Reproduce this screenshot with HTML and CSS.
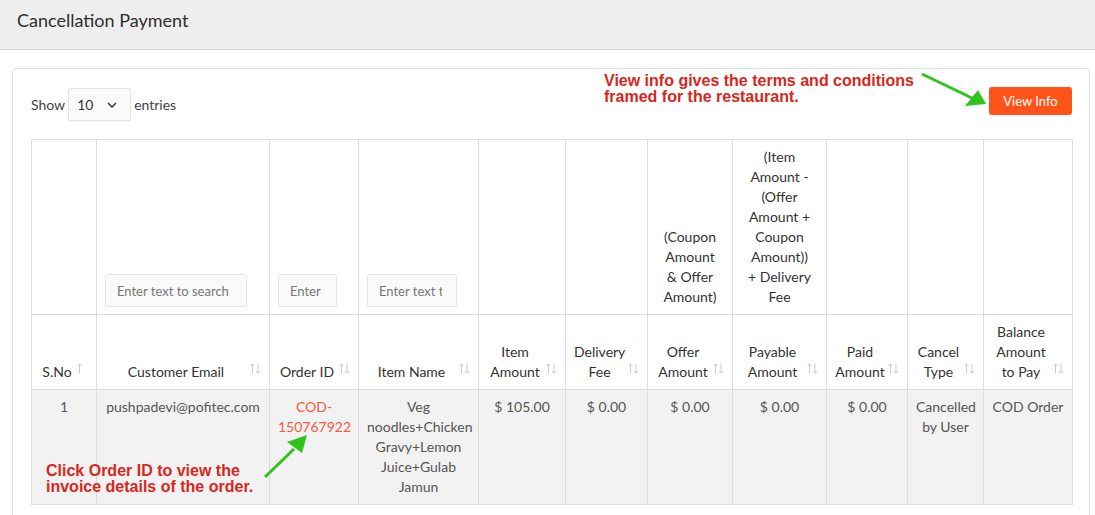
FILE: index.html
```html
<!DOCTYPE html>
<html lang="en">
<head>
<meta charset="utf-8">
<title>Cancellation Payment</title>
<link rel="stylesheet" href="styles.css">
</head>
<body>
<header class="page-head">
  <h1 class="page-title">Cancellation Payment</h1>
</header>

<main class="card">
  <div class="toolbar">
    <div class="length">
      <span>Show</span>
      <span class="select">10
        <svg class="chev" width="10" height="6" viewBox="0 0 10 6"><polyline points="1,1 5,5 9,1" fill="none" stroke="#333" stroke-width="1.5"/></svg>
      </span>
      <span>entries</span>
    </div>
    <button class="btn-info">View Info</button>
  </div>

  <table class="grid">
    <colgroup>
      <col class="c1"><col class="c2"><col class="c3"><col class="c4"><col class="c5"><col class="c6"><col class="c7"><col class="c8"><col class="c9"><col class="c10"><col class="c11">
    </colgroup>
    <thead>
      <tr class="filters">
        <th></th>
        <th><input class="search w-email" placeholder="Enter text to search"></th>
        <th><input class="search w-order" placeholder="Enter text to search"></th>
        <th><input class="search w-item" placeholder="Enter text to search"></th>
        <th></th>
        <th></th>
        <th>(Coupon<br>Amount<br>&amp; Offer<br>Amount)</th>
        <th>(Item<br>Amount -<br>(Offer<br>Amount +<br>Coupon<br>Amount))<br>+ Delivery<br>Fee</th>
        <th></th>
        <th></th>
        <th></th>
      </tr>
      <tr class="heads">
        <th class="sorted">S.No<svg class="sort" width="11" height="11" viewBox="0 0 11 11"><path d="M2.5 10.5V1M0.6 3L2.5 0.8L4.4 3" fill="none" stroke="#c6ccd6" stroke-width="1"/></svg></th>
        <th>Customer Email<svg class="sort" width="11" height="11" viewBox="0 0 11 11"><path d="M2.5 10.5V1M0.6 3L2.5 0.8L4.4 3" fill="none" stroke="#c6ccd6" stroke-width="1"/><path d="M8 0.5V10M6.1 8L8 10.2L9.9 8" fill="none" stroke="#c6ccd6" stroke-width="1"/></svg></th>
        <th>Order ID<svg class="sort" width="11" height="11" viewBox="0 0 11 11"><path d="M2.5 10.5V1M0.6 3L2.5 0.8L4.4 3" fill="none" stroke="#c6ccd6" stroke-width="1"/><path d="M8 0.5V10M6.1 8L8 10.2L9.9 8" fill="none" stroke="#c6ccd6" stroke-width="1"/></svg></th>
        <th>Item Name<svg class="sort" width="11" height="11" viewBox="0 0 11 11"><path d="M2.5 10.5V1M0.6 3L2.5 0.8L4.4 3" fill="none" stroke="#c6ccd6" stroke-width="1"/><path d="M8 0.5V10M6.1 8L8 10.2L9.9 8" fill="none" stroke="#c6ccd6" stroke-width="1"/></svg></th>
        <th>Item<br>Amount<svg class="sort" width="11" height="11" viewBox="0 0 11 11"><path d="M2.5 10.5V1M0.6 3L2.5 0.8L4.4 3" fill="none" stroke="#c6ccd6" stroke-width="1"/><path d="M8 0.5V10M6.1 8L8 10.2L9.9 8" fill="none" stroke="#c6ccd6" stroke-width="1"/></svg></th>
        <th>Delivery<br>Fee<svg class="sort" width="11" height="11" viewBox="0 0 11 11"><path d="M2.5 10.5V1M0.6 3L2.5 0.8L4.4 3" fill="none" stroke="#c6ccd6" stroke-width="1"/><path d="M8 0.5V10M6.1 8L8 10.2L9.9 8" fill="none" stroke="#c6ccd6" stroke-width="1"/></svg></th>
        <th>Offer<br>Amount<svg class="sort" width="11" height="11" viewBox="0 0 11 11"><path d="M2.5 10.5V1M0.6 3L2.5 0.8L4.4 3" fill="none" stroke="#c6ccd6" stroke-width="1"/><path d="M8 0.5V10M6.1 8L8 10.2L9.9 8" fill="none" stroke="#c6ccd6" stroke-width="1"/></svg></th>
        <th>Payable<br>Amount<svg class="sort" width="11" height="11" viewBox="0 0 11 11"><path d="M2.5 10.5V1M0.6 3L2.5 0.8L4.4 3" fill="none" stroke="#c6ccd6" stroke-width="1"/><path d="M8 0.5V10M6.1 8L8 10.2L9.9 8" fill="none" stroke="#c6ccd6" stroke-width="1"/></svg></th>
        <th>Paid<br>Amount<svg class="sort" width="11" height="11" viewBox="0 0 11 11"><path d="M2.5 10.5V1M0.6 3L2.5 0.8L4.4 3" fill="none" stroke="#c6ccd6" stroke-width="1"/><path d="M8 0.5V10M6.1 8L8 10.2L9.9 8" fill="none" stroke="#c6ccd6" stroke-width="1"/></svg></th>
        <th>Cancel<br>Type<svg class="sort" width="11" height="11" viewBox="0 0 11 11"><path d="M2.5 10.5V1M0.6 3L2.5 0.8L4.4 3" fill="none" stroke="#c6ccd6" stroke-width="1"/><path d="M8 0.5V10M6.1 8L8 10.2L9.9 8" fill="none" stroke="#c6ccd6" stroke-width="1"/></svg></th>
        <th>Balance<br>Amount<br>to Pay<svg class="sort" width="11" height="11" viewBox="0 0 11 11"><path d="M2.5 10.5V1M0.6 3L2.5 0.8L4.4 3" fill="none" stroke="#c6ccd6" stroke-width="1"/><path d="M8 0.5V10M6.1 8L8 10.2L9.9 8" fill="none" stroke="#c6ccd6" stroke-width="1"/></svg></th>
      </tr>
    </thead>
    <tbody>
      <tr>
        <td>1</td>
        <td>pushpadevi@pofitec.com</td>
        <td><a class="order-link" href="#">COD-<br>150767922</a></td>
        <td>Veg<br>noodles+Chicken<br>Gravy+Lemon<br>Juice+Gulab<br>Jamun</td>
        <td>$ 105.00</td>
        <td>$ 0.00</td>
        <td>$ 0.00</td>
        <td>$ 0.00</td>
        <td>$ 0.00</td>
        <td>Cancelled<br>by User</td>
        <td>COD Order</td>
      </tr>
    </tbody>
  </table>
</main>

<p class="note note-top">View info gives the terms and conditions<br>framed for the restaurant.</p>
<p class="note note-bottom">Click Order ID to view the<br>invoice details of the order.</p>

<svg class="arrows" width="1095" height="515" viewBox="0 0 1095 515">
  <line x1="922" y1="74" x2="972" y2="98" stroke="#2fc41b" stroke-width="3"/>
  <polygon points="986,104 965,106 978,90" fill="#2fc41b"/>
  <line x1="265" y1="477" x2="294" y2="449" stroke="#2fc41b" stroke-width="3"/>
  <polygon points="307,435 287,442 302,453" fill="#2fc41b"/>
</svg>
</body>
</html>
```

FILE: styles.css
```css
* { box-sizing: border-box; }

body {
  margin: 0;
  position: relative;
  background: #ffffff;
  font-family: Lato, "Open Sans", sans-serif;
  font-size: 14px;
  color: #333;
  overflow: hidden;
}

.page-head {
  height: 50px;
  background: #eeeeee;
  border-bottom: 1px solid #d2d2d2;
  padding: 0 17px;
  display: flex;
  align-items: center;
}

.page-title {
  margin: 0 0 9px;
  font-size: 18px;
  font-weight: normal;
  color: #2f2f2f;
}

.card {
  margin: 18px 5px 0 12px;
  border: 1px solid #dddddd;
  border-radius: 4px;
  padding: 18px 17px 20px 18px;
}

.toolbar {
  display: flex;
  justify-content: space-between;
  align-items: flex-start;
  margin-bottom: 18px;
}

.length {
  display: flex;
  align-items: center;
  gap: 3px;
  color: #444;
  padding-top: 1px;
}

.select {
  width: 63px;
  height: 33px;
  border: 1px solid #e3e3e3;
  background: #fafafa;
  border-radius: 2px;
  box-shadow: 0 1px 1px rgba(0,0,0,0.05);
  display: flex;
  align-items: center;
  justify-content: space-between;
  padding: 0 13px 0 8px;
  color: #333;
}

.btn-info {
  width: 83px;
  height: 28px;
  border: 0;
  border-radius: 3px;
  background: #ff5419;
  color: #ffffff;
  font-family: inherit;
  font-size: 13px;
  padding: 0;
}

.grid {
  width: 1041px;
  table-layout: fixed;
  border-collapse: collapse;
  border: 1px solid #dddddd;
}

.c1 { width: 65px; }
.c2 { width: 173px; }
.c3 { width: 89px; }
.c4 { width: 120px; }
.c5 { width: 87px; }
.c6 { width: 82px; }
.c7 { width: 85px; }
.c8 { width: 94px; }
.c9 { width: 81px; }
.c10 { width: 76px; }
.c11 { width: 89px; }

.grid th,
.grid td {
  border: 1px solid #dddddd;
  line-height: 20px;
  text-align: center;
}

.grid th {
  font-weight: normal;
  color: #333;
  vertical-align: bottom;
}

.filters th {
  padding: 7px 8px 7px;
  height: 173px;
}

.heads th {
  position: relative;
  padding: 7px 22px 7px 8px;
  height: 74px;
}

.sort {
  position: absolute;
  right: 8px;
  bottom: 15px;
}

.search {
  display: block;
  height: 33px;
  border: 1px solid #e5e5e5;
  background: #fafafa;
  border-radius: 2px;
  font-family: inherit;
  font-size: 13px;
  color: #555;
  padding: 0 11px;
  outline: none;
}

.search::placeholder { color: #777; }

.w-email { width: 142px; }
.w-order { width: 59px; padding-right: 13px; }
.w-item { width: 90px; padding-right: 14px; }

.grid tbody td {
  background: #f2f2f2;
  color: #555;
  vertical-align: top;
  padding: 7px 8px 7px;
  height: 114px;
}

.order-link {
  color: #fa5a3a;
  text-decoration: none;
}

.note {
  position: absolute;
  margin: 0;
  font-family: "Liberation Sans", Arial, sans-serif;
  font-weight: bold;
  font-size: 16px;
  line-height: 16px;
  color: #d9261c;
}

.note-top { left: 604px; top: 73px; }
.note-bottom { left: 46px; top: 463px; }

.arrows {
  position: absolute;
  left: 0;
  top: 0;
  pointer-events: none;
}
```
